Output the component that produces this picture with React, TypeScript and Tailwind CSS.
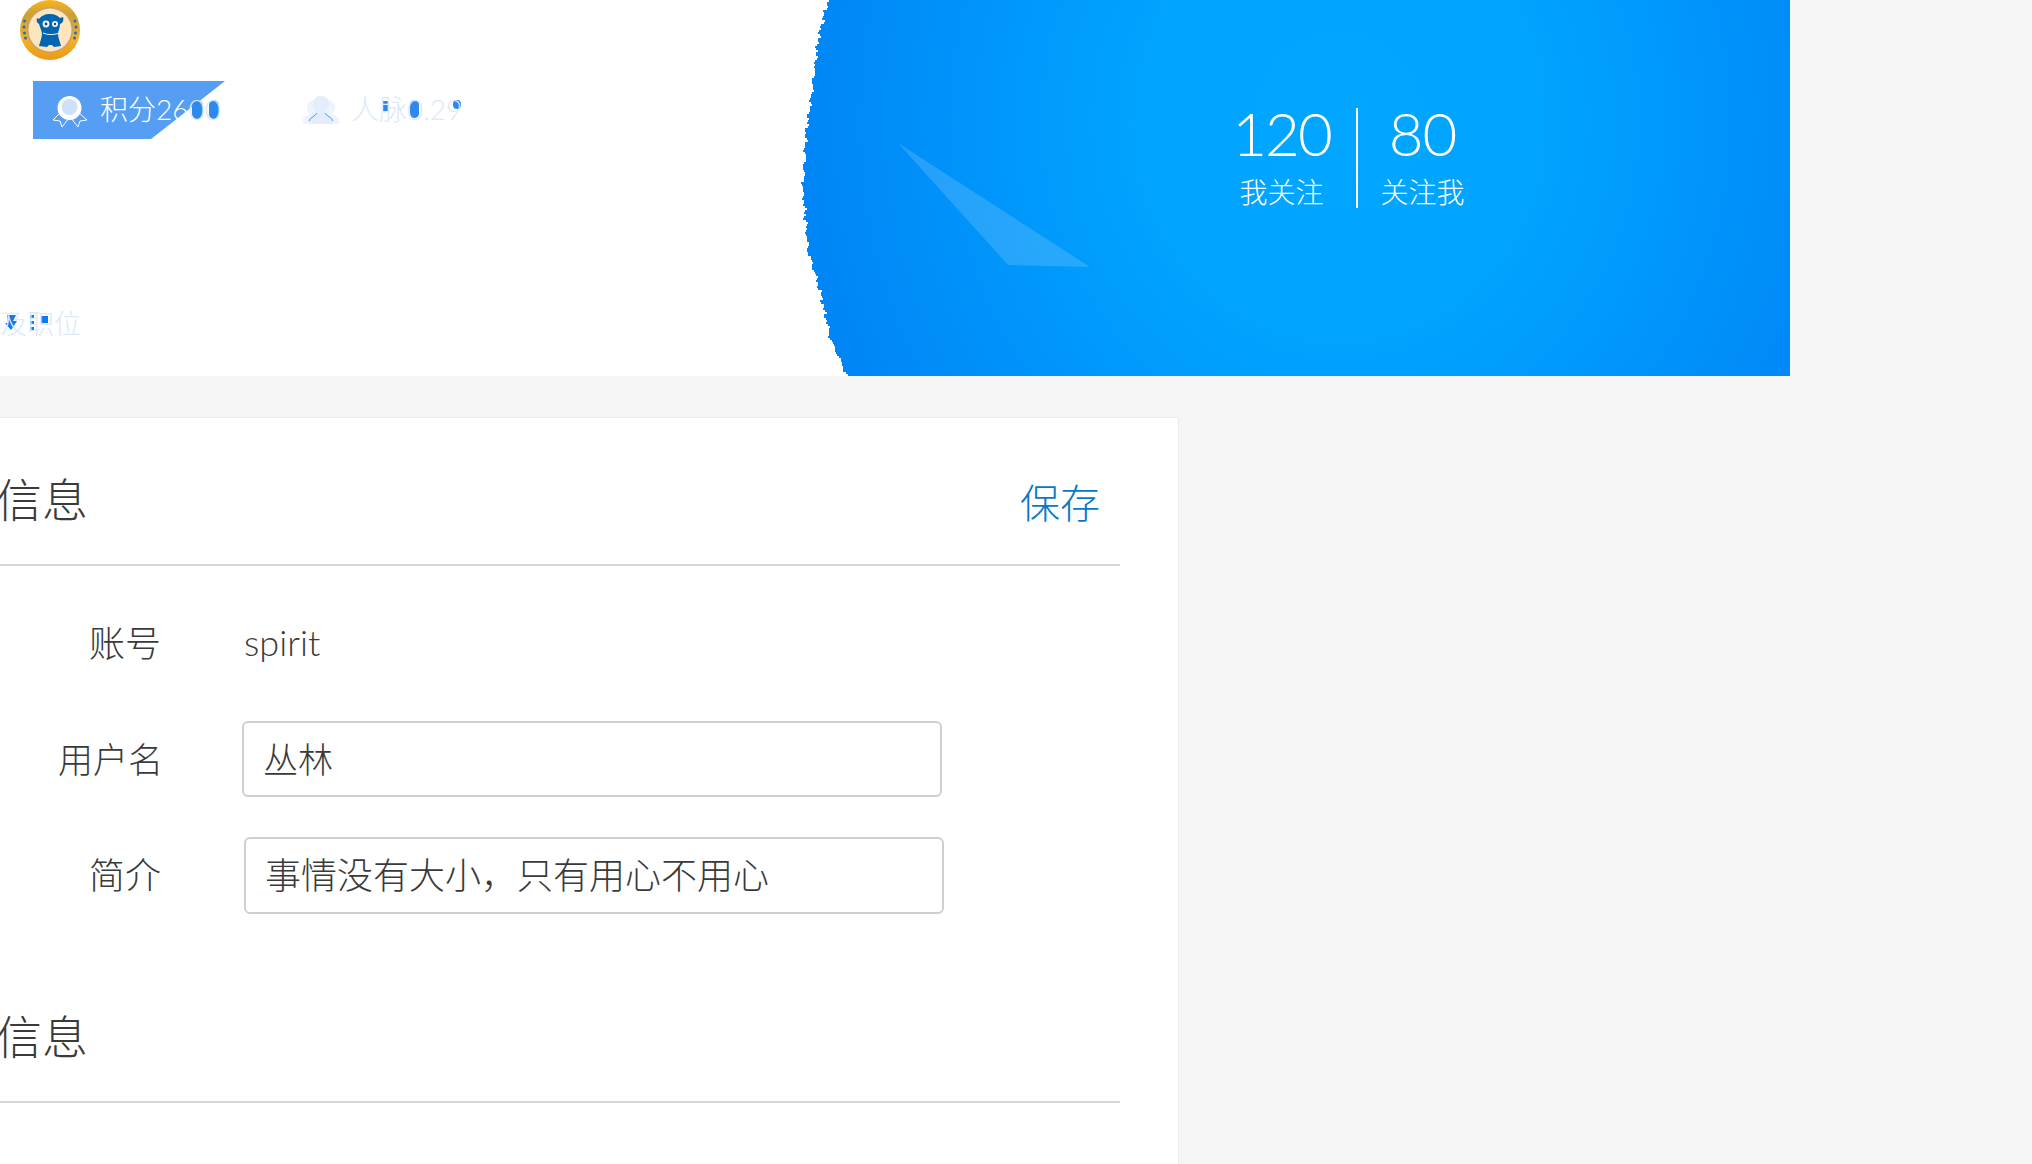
const fontStack = "font-['Lato','Noto_Sans_CJK_SC',sans-serif]";

const edgePoints: [number, number][] = [
  [0, 28], [38, 18], [100, 11], [130, 6], [190, 3], [250, 8], [290, 20], [340, 31], [376, 48],
];

// torn left edge of the blue banner
function tornEdge() {
  const pts: string[] = [];
  for (let y = 0; y <= 376; y += 2) {
    let i = 0;
    while (i < edgePoints.length - 2 && edgePoints[i + 1][0] < y) i++;
    const [y0, x0] = edgePoints[i];
    const [y1, x1] = edgePoints[i + 1];
    const x = x0 + ((x1 - x0) * (y - y0)) / (y1 - y0);
    const noise = Math.round(Math.sin(y * 0.37) * 1.1 + Math.sin(y * 0.91 + 1) * 0.8 + Math.sin(y * 2.3) * 0.6);
    pts.push(`${Math.round(x) + noise}px ${y}px`, `${Math.round(x) + noise}px ${y + 2}px`);
  }
  return `polygon(100% 0, 100% 100%, ${pts.reverse().join(', ')})`;
}

function Avatar() {
  return (
    <svg width="60" height="60" viewBox="0 0 60 60">
      <defs>
        <linearGradient id="gold" x1="0" y1="0" x2="0" y2="1">
          <stop offset="0" stopColor="#fbb41e" />
          <stop offset="0.25" stopColor="#c9a034" />
          <stop offset="0.65" stopColor="#f4b02c" />
          <stop offset="1" stopColor="#eb9a14" />
        </linearGradient>
      </defs>
      <circle cx="30" cy="30" r="30" fill="url(#gold)" />
      <circle cx="30" cy="30" r="23" fill="#c9a06c" />
      <circle cx="30" cy="30" r="21.500" fill="#fde6bd" />
      <g fill="#1f6fb8">
        <circle cx="4.500" cy="21" r="1.500" />
        <circle cx="4" cy="27" r="1.500" />
        <circle cx="4.500" cy="33" r="1.500" />
        <circle cx="5.500" cy="38" r="1.500" />
        <circle cx="55" cy="21" r="1.500" />
        <circle cx="56" cy="27" r="1.500" />
        <circle cx="55.500" cy="33" r="1.500" />
        <circle cx="54.500" cy="38" r="1.500" />
      </g>
      <path
        d="M19 19c2-3 6-5 11-5s8 2 10 4l3-1c1 3 0 6-3 7 0 4-2 7-2 10 0 3 2 8 3 12l-7 1-2-2h-3l-2 2-8-1c1-4 3-9 3-12 0-3-2-6-3-10-2-1-3-4-2-6z"
        fill="#0066b2"
      />
      <circle cx="26" cy="24" r="3.400" fill="#f4f4f4" />
      <circle cx="35" cy="24" r="3" fill="#f4f4f4" />
      <circle cx="26" cy="24" r="1.400" fill="#0a4e86" />
      <circle cx="35" cy="24" r="1.200" fill="#0a4e86" />
      <path d="M23 33c4 2 10 2 15 .5" stroke="#e8f2fb" strokeWidth="1" fill="none" />
    </svg>
  );
}

function AwardIcon() {
  return (
    <svg width="36" height="34" viewBox="0 0 36 34" fill="none">
      <path d="M9 18 1 26l7 1 2 6 7-9M26 18l9 8-7 1-2 6-7-9" stroke="#fff" strokeWidth="1" />
      <circle cx="17.500" cy="14" r="12" fill="#fff" />
      <circle cx="17.500" cy="13" r="8" fill="#cfe1fa" />
    </svg>
  );
}

function PeopleIcon() {
  return (
    <svg width="38" height="30" viewBox="0 0 38 30">
      <path d="M5 12c0-4 3-7 6-7l8 17-6 7H3c-3 0-3-3-2-5 1-3 5-4 7-5-2-2-3-4-3-7zM33 12c0-4-3-7-6-7l-8 17 6 7h10c3 0 3-3 2-5-1-3-5-4-7-5 2-2 3-4 3-7z" fill="#eef4fd" />
      <path d="M11 9c0-5 3-8 8-8s8 3 8 8c0 4-2 7-4 9 1 2 6 3 8 6 1 2 0 5-3 5H10c-3 0-4-3-3-5 2-3 7-4 8-6-2-2-4-5-4-9z" fill="#e3eefc" />
      <path d="M7 26c1-4 7-5 8-8M31 26c-1-4-7-5-8-8" stroke="#4d9bf0" strokeWidth="1" fill="none" />
    </svg>
  );
}

function SectionTitle({ action }: { action?: string }) {
  return (
    <div className="flex h-[148px] w-[1120px] items-center justify-between border-b-2 border-[#d6d6d6] pr-[20px] pt-[18px]">
      <h2 className="ml-[-96px] text-[46px] font-light leading-none text-[#3a3a3a]">基本信息</h2>
      {action && <a className="mt-[5px] text-[40px] font-light leading-none text-[#0a78c8]">{action}</a>}
    </div>
  );
}

function Row({ label, children, labelClass }: { label: string; children: React.ReactNode; labelClass: string }) {
  return (
    <div className="flex h-[116px] items-center">
      <div className={`text-right font-light leading-none text-[#3a3a3a] ${labelClass}`}>{label}</div>
      {children}
    </div>
  );
}

export default function App() {
  return (
    <div className={`h-[1164px] overflow-hidden bg-[#f5f5f5] ${fontStack}`}>
      {/* Banner */}
      <header className="flex h-[376px] w-[1790px] bg-white">
        <div className="flex w-[800px] flex-col">
          <div className="ml-[20px]">
            <Avatar />
          </div>

          <div className="mt-[21px] flex items-start">
            <div className="relative ml-[33px] h-[58px] w-[192px]">
              <div className="h-full w-full bg-[#559ef3] [clip-path:polygon(0_0,100%_0,61.500%_100%,0_100%)]" />
              <span className="absolute left-[159px] top-[19px] h-[19px] w-[11px] rounded-full bg-[#2f88ee]" />
              <span className="absolute left-[176px] top-[19px] h-[19px] w-[10px] rounded-full bg-[#2f88ee]" />
              <div className="absolute left-[19px] top-[13px]">
                <AwardIcon />
              </div>
              <div className="absolute left-[67px] top-[7px] whitespace-nowrap text-[28px] font-light text-white">
                积分26<span className="text-[#dbe9fb]">00</span>
              </div>
            </div>

            <div className="relative ml-[77px] h-[58px] w-[180px]">
              <span className="absolute left-[81px] top-[20px] h-[11px] w-[5px] bg-[#2f88ee]" />
              <span className="absolute left-[108px] top-[19px] h-[18px] w-[9px] rounded-full bg-[#2f88ee]" />
              <span className="absolute left-[151px] top-[19px] h-[9px] w-[8px] rounded-full bg-[#2f88ee]" />
              <div className="absolute left-0 top-[14px]">
                <PeopleIcon />
              </div>
              <div className="absolute left-[49px] top-[7px] whitespace-nowrap text-[28px] font-light text-[#dbe9fb]">
                人脉0.29
              </div>
            </div>
          </div>

          <div className="relative mt-[158px] h-[42px] w-[81px]">
            <svg className="absolute left-[5px] top-[18px]" width="12" height="15" viewBox="0 0 12 15">
              <path d="M2 0h9L8 6h4L6 15 0 8h3z" fill="#0a7bf0" />
            </svg>
            <span className="absolute left-[30px] top-[18px] h-[4px] w-[4px] bg-[#0a7bf0]" />
            <span className="absolute left-[30px] top-[24px] h-[4px] w-[4px] bg-[#0a7bf0]" />
            <span className="absolute left-[30px] top-[30px] h-[3px] w-[4px] bg-[#0a7bf0]" />
            <span className="absolute left-[41px] top-[19px] h-[7px] w-[7px] bg-[#0a7bf0]" />
            <div className="absolute right-0 top-[7px] whitespace-nowrap text-[27px] font-light text-[#dbe9fb]">
              及职位
            </div>
          </div>
        </div>

        <div
          className="relative flex w-[990px] bg-[radial-gradient(ellipse_560px_600px_at_540px_120px,#00a6ff_0%,#00a4ff_35%,#0084f6_100%)]"
          style={{ clipPath: tornEdge() }}
        >
          <svg className="absolute inset-0" width="990" height="376">
            <polygon points="98,143 208,265 290,267" fill="#fff" fillOpacity="0.15" />
          </svg>
          <div className="relative ml-[407px] mt-[108px] flex h-[100px] items-start text-white">
            <div className="flex w-[149px] flex-col items-center">
              <span className="text-[60px] font-light leading-[50px] tracking-[-2px]">120</span>
              <span className="mt-[16px] text-[28px] font-light leading-[36px]">我关注</span>
            </div>
            <div className="h-[100px] w-[2px] bg-white" />
            <div className="flex w-[129px] flex-col items-center">
              <span className="text-[60px] font-light leading-[50px] tracking-[-1px]">80</span>
              <span className="mt-[16px] text-[28px] font-light leading-[36px]">关注我</span>
            </div>
          </div>
        </div>
      </header>

      {/* Form panel */}
      <main className="mt-[41px] h-[747px] w-[1179px] overflow-hidden border-r border-t border-[#ececec] bg-white">
        <SectionTitle action="保存" />
        <div className="pt-[19px]">
          <Row label="账号" labelClass="w-[161px] text-[36px]">
            <span className="mb-[3px] ml-[83px] text-[36px] font-light leading-none text-[#3a3a3a]">spirit</span>
          </Row>
          <Row label="用户名" labelClass="w-[163px] text-[35px]">
            <input
              readOnly
              value="丛林"
              className="ml-[79px] h-[76px] w-[700px] rounded-[6px] border-2 border-[#cfcfcf] bg-white pb-[4px] pl-[19px] pr-[20px] text-[35px] font-light text-[#3a3a3a] outline-none"
            />
          </Row>
          <Row label="简介" labelClass="w-[161px] text-[36px]">
            <input
              readOnly
              value="事情没有大小，只有用心不用心"
              className="ml-[83px] h-[77px] w-[700px] rounded-[6px] border-2 border-[#cfcfcf] bg-white pb-[5px] pl-[19px] pr-[20px] text-[36px] font-light text-[#3a3a3a] outline-none"
            />
          </Row>
        </div>
        <div className="mt-[22px]">
          <SectionTitle />
        </div>
      </main>
    </div>
  );
}
